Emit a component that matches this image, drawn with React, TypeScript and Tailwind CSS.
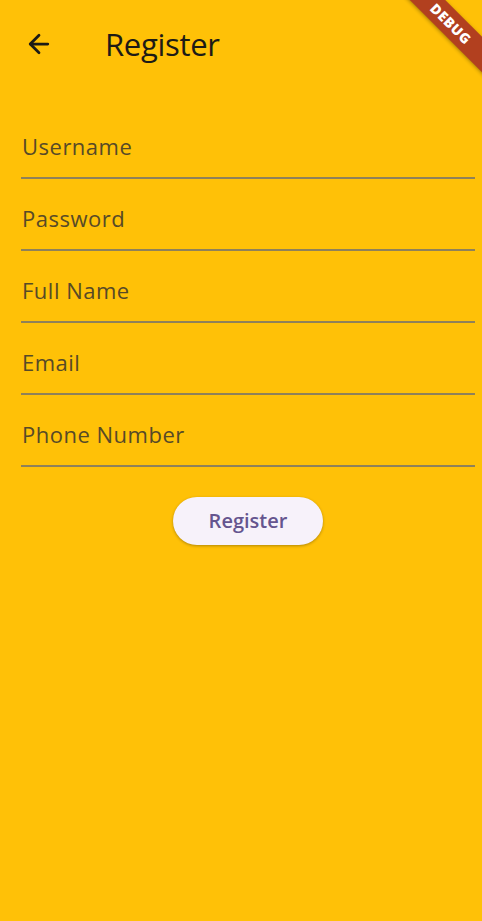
import { ArrowLeft } from "lucide-react";

const fields = ["Username", "Password", "Full Name", "Email", "Phone Number"];

export default function App() {
  return (
    <div
      className="relative min-h-[921px] w-full overflow-hidden bg-[#ffc107]"
      style={{ fontFamily: '"Open Sans", "Noto Sans", sans-serif' }}
    >
      {/* app bar */}
      <div className="flex h-[88px] items-center px-[24px]">
        <ArrowLeft className="h-[30px] w-[30px] text-[#1d1b16]" strokeWidth={2.2} />
        <h1 className="ml-[51px] text-[31px] font-normal leading-none tracking-[-0.3px] text-[#1d1b16]">Register</h1>
      </div>

      {/* form */}
      <div className="mt-[19px] flex flex-col pl-[21px] pr-[7px]">
        {fields.map((f) => (
          <div key={f} className="flex h-[72px] items-end border-b-[2px] border-[#8f8159] pb-[20px]">
            <span className="pl-px text-[22px] leading-none tracking-[0.5px] text-[#574a27]">{f}</span>
          </div>
        ))}

        <div className="mt-[30px] flex justify-center">
          <button className="h-[48px] w-[150px] rounded-full bg-[#f7f2fa] text-[20px] font-semibold text-[#65558f] shadow-[0_1px_3px_rgba(0,0,0,0.3)]">
            Register
          </button>
        </div>
      </div>

      {/* debug banner */}
      <div className="absolute right-[-54px] top-[11px] w-[170px] rotate-45 bg-[#b2401f] py-[2px] text-center text-[14px] font-extrabold tracking-[0.5px] text-white shadow-[0_1px_4px_rgba(0,0,0,0.35)]">
        DEBUG
      </div>
    </div>
  );
}
